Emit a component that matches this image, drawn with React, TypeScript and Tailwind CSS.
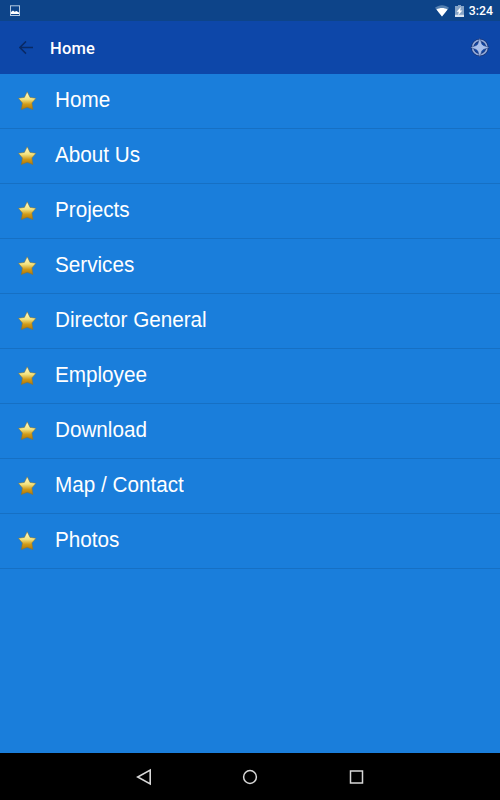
const menuItems = [
  "Home",
  "About Us",
  "Projects",
  "Services",
  "Director General",
  "Employee",
  "Download",
  "Map / Contact",
  "Photos",
];

const PictureIcon = () => (
  <svg width="12" height="12" viewBox="0 0 12 12" className="shrink-0">
    <rect x="1.5" y=".8" width="9" height="9.7" fill="none" stroke="#b5c9df" strokeWidth="1" />
    <path d="M2 9V7L4 5.6L5.6 6.8L7.4 6L10 7.6V9Z" fill="#fff" />
  </svg>
);

const WifiIcon = () => (
  <svg width="14" height="12" viewBox="0 0 14 12" className="shrink-0">
    <path d="M0 2.8C4 -.7 10 -.7 14 2.8L7 11.6Z" fill="#5580b0" />
    <path d="M1.4 4.5C4.9 2.5 9.1 2.5 12.6 4.5L7 11.6Z" fill="#fff" />
  </svg>
);

const BatteryIcon = () => (
  <svg width="9" height="12" viewBox="0 0 9 12" className="shrink-0">
    <path d="M3 0h3v1h3v11H0V1h3Z" fill="#86a4c6" />
    <path d="M0 9.8h9V12H0Z" fill="#dce6f1" />
    <path d="M5.8 2L1.6 6.8h2.2L3.2 10.2L7.4 5.4H5.2Z" fill="#fff" />
  </svg>
);

const BackArrow = () => (
  <svg width="14" height="14" viewBox="0 0 14 14" className="shrink-0">
    <path d="M14 6.5H1.2M7 .4L.9 6.5L7 12.6" fill="none" stroke="#092a66" strokeWidth="1.5" />
  </svg>
);

const CompassIcon = () => (
  <svg width="22" height="22" viewBox="0 0 22 22" className="shrink-0">
    <circle cx="10.8" cy="10.5" r="7.2" fill="none" stroke="#173477" strokeWidth="3.2" />
    <circle cx="10.8" cy="10.5" r="7.2" fill="none" stroke="#91a9d8" strokeWidth="1.6" />
    <path
      d="M10.8 .8L13.2 8.1L20.5 10.5L13.2 12.9L10.8 20.2L8.4 12.9L1.1 10.5L8.4 8.1Z"
      fill="#a9c0ec"
      stroke="#173477"
      strokeWidth=".5"
    />
    <circle cx="10.8" cy="10.5" r="3.6" fill="#a9c0ec" />
  </svg>
);

const StarIcon = () => (
  <svg width="20" height="20" viewBox="0 0 20 20" className="shrink-0">
    <defs>
      <linearGradient id="gold" x1="0" y1="0" x2="0" y2="1">
        <stop offset="0" stopColor="#fffbd0" />
        <stop offset=".42" stopColor="#f3e380" />
        <stop offset=".7" stopColor="#d09a18" />
        <stop offset="1" stopColor="#b07408" />
      </linearGradient>
    </defs>
    <path
      d="M10.2 .8L13 6.4L18.9 7.3L14.9 11.9L15.9 18.6L10.2 16.3L4.4 18.6L5.4 11.9L1.5 7.3L7.4 6.4Z"
      fill="url(#gold)"
      stroke="#8f7424"
      strokeWidth=".5"
      strokeLinejoin="round"
    />
  </svg>
);

const StatusBar = () => (
  <div className="flex h-[21px] shrink-0 items-center bg-[#0d4489] pl-[9px] pr-[7px]">
    <PictureIcon />
    <div className="ml-auto flex items-center">
      <WifiIcon />
      <div className="ml-[6px] mr-[5px]">
        <BatteryIcon />
      </div>
      <span className="pt-px font-[Roboto,sans-serif] text-[12.3px] font-medium leading-5 text-white">3:24</span>
    </div>
  </div>
);

const Header = () => (
  <header className="flex h-[53px] shrink-0 items-center bg-[#0d47a9] pl-[19px] pr-[9px]">
    <BackArrow />
    <h1 className="ml-[17px] pt-[3px] font-[Roboto,sans-serif] text-[16.5px] font-medium tracking-[0.2px] text-white">
      Home
    </h1>
    <div className="ml-auto">
      <CompassIcon />
    </div>
  </header>
);

const NavBar = () => (
  <div className="flex h-[47px] shrink-0 items-center justify-center gap-[90px] bg-black">
    <svg width="16" height="18" viewBox="0 0 16 18" fill="none" stroke="#d8d8d8" strokeWidth="1.6">
      <path d="M14.2 2V16L1.7 9Z" />
    </svg>
    <svg width="16" height="16" viewBox="0 0 16 16" fill="none" stroke="#d8d8d8" strokeWidth="1.5">
      <circle cx="8" cy="8" r="6.4" />
    </svg>
    <svg width="16" height="16" viewBox="0 0 16 16" fill="none" stroke="#d8d8d8" strokeWidth="1.5">
      <rect x="2.5" y="2" width="12" height="12" />
    </svg>
  </div>
);

const App = () => {
  return (
    <div className="flex h-[800px] w-[500px] flex-col overflow-hidden bg-[#1a7edb]">
      <StatusBar />
      <Header />
      <ul className="flex-1">
        {menuItems.map((item) => (
          <li key={item} className="flex h-[55px] items-center border-b border-[#1670c4] pl-[17px]">
            <StarIcon />
            <span className="ml-[17.5px] origin-left scale-x-[0.94] pb-[2px] font-['Liberation_Sans',sans-serif] text-[22px] leading-6 text-white">
              {item}
            </span>
          </li>
        ))}
      </ul>
      <NavBar />
    </div>
  );
};

export default App;
